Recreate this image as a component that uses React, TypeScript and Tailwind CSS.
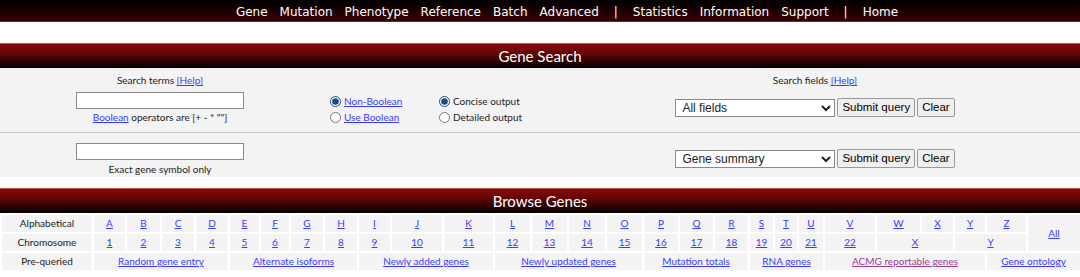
import React from 'react'

const body = { fontFamily: 'Lato, "Open Sans", sans-serif' }
const ctl = { fontFamily: '"Liberation Sans", Arial, sans-serif' }

const navItems = ['Gene', 'Mutation', 'Phenotype', 'Reference', 'Batch', 'Advanced', '|', 'Statistics', 'Information', 'Support', '|', 'Home']

const colWidths = [92, 33, 35, 34, 34, 31, 30, 34, 34, 33, 52, 51, 37, 37, 38, 37, 36, 35, 35, 25, 24, 26, 52, 45, 33, 32, 41, 54]
const letters = 'ABCDEFGHIJKLMNOPQRSTUVWXYZ'.split('')
const chroms = Array.from({ length: 22 }, (_, i) => String(i + 1))
const prequeried: [string, number, boolean?][] = [
  ['Random gene entry', 4],
  ['Alternate isoforms', 4],
  ['Newly added genes', 3],
  ['Newly updated genes', 4],
  ['Mutation totals', 3],
  ['RNA genes', 3],
  ['ACMG reportable genes', 4, true],
  ['Gene ontology', 2],
]

function Bar({ title }: { title: string }) {
  return (
    <div
      className="h-[25px] flex items-center justify-center text-white text-[15px] border-t border-[#c25a5a]"
      style={{ background: 'linear-gradient(to bottom, #8c0a0a 0%, #5a0505 45%, #000 100%)', ...body }}
    >
      {title}
    </div>
  )
}

function Link({ children, visited }: { children: React.ReactNode; visited?: boolean }) {
  return (
    <a href="#" className={visited ? 'underline text-[#9c3d8f]' : 'underline text-[#3b3bff]'}>
      {children}
    </a>
  )
}

function Radio({ checked, name }: { checked?: boolean; name: string }) {
  return (
    <input
      type="radio"
      name={name}
      defaultChecked={checked}
      className="w-[11px] h-[11px] m-0 mr-[3px] accent-[#1d4c80] align-[-1px]"
    />
  )
}

function SelectRow({ value }: { value: string }) {
  return (
    <div className="flex items-center gap-[2px]" style={ctl}>
      <select defaultValue={value} className="w-[160px] h-[18px] text-[12px] leading-[16px] bg-white border border-[#8a8a8a] pl-[2px]">
        <option>{value}</option>
      </select>
      <button className="h-[19px] px-[4px] text-[11.5px] leading-[17px] bg-[#efefef] border border-[#9a9a9a] rounded-[2px] text-black">
        Submit query
      </button>
      <button className="h-[19px] px-[4px] text-[11.5px] leading-[17px] bg-[#efefef] border border-[#9a9a9a] rounded-[2px] text-black">
        Clear
      </button>
    </div>
  )
}

export default function App() {
  const cell = 'border-2 border-white bg-[#f3f3f3] text-center h-[19px] p-0 leading-[15px]'
  return (
    <div className="w-[1080px] h-[277px] bg-white text-[#222] text-[10px] overflow-hidden" style={body}>
      {/* top nav */}
      <div
        className="h-[22px] flex items-center pt-[3px] justify-center gap-[12px] pl-[54px] text-white text-[12px] border-b border-[#3a3a3a]"
        style={{ background: 'linear-gradient(to bottom, #000 0%, #1a0000 50%, #3c0303 100%)', fontFamily: '"DejaVu Sans", Verdana, sans-serif' }}
      >
        {navItems.map((n, i) => (
          <span key={i} className={n === '|' ? 'px-[3px]' : ''}>{n}</span>
        ))}
      </div>

      <div className="h-[21px]" />

      <Bar title="Gene Search" />

      <div className="bg-[#f3f3f3]">
        {/* row 1 */}
        <div className="h-[65px] flex border-b border-[#c8c8c8]">
          <div className="w-[320px] flex flex-col items-center pt-[5px]">
            <div className="leading-[14px]">
              Search terms <Link>[Help]</Link>
            </div>
            <input className="mt-[5px] w-[168px] h-[17px] bg-white border border-[#8a8a8a]" />
            <div className="mt-[1px] leading-[14px]">
              <Link>Boolean</Link> operators are [+ - * ""]
            </div>
          </div>
          <div className="w-[110px] pt-[25px] pl-[10px] leading-[16px]">
            <div className="flex items-center"><Radio name="b" checked /><Link>Non-Boolean</Link></div>
            <div className="flex items-center"><Radio name="b" /><Link>Use Boolean</Link></div>
          </div>
          <div className="w-[210px] pt-[25px] pl-[9px] leading-[16px]">
            <div className="flex items-center"><Radio name="o" checked />Concise output</div>
            <div className="flex items-center"><Radio name="o" />Detailed output</div>
          </div>
          <div className="w-[350px] flex flex-col items-center pt-[5px]">
            <div className="leading-[14px]">
              Search fields <Link>[Help]</Link>
            </div>
            <div className="mt-[11px]">
              <SelectRow value="All fields" />
            </div>
          </div>
        </div>
        {/* row 2 */}
        <div className="h-[44px] flex">
          <div className="w-[320px] flex flex-col items-center pt-[10px]">
            <input className="w-[168px] h-[17px] bg-white border border-[#8a8a8a]" />
            <div className="mt-[2px] leading-[14px]">Exact gene symbol only</div>
          </div>
          <div className="w-[320px]" />
          <div className="w-[350px] flex flex-col items-center pt-[16px]">
            <SelectRow value="Gene summary" />
          </div>
        </div>
      </div>

      <div className="h-[11px]" />

      <Bar title="Browse Genes" />

      <table className="w-[1080px] table-fixed border-collapse border-b-2 border-b-[#c8c8c8]">
        <colgroup>
          {colWidths.map((w, i) => (
            <col key={i} style={{ width: w }} />
          ))}
        </colgroup>
        <tbody>
          <tr>
            <td className={cell}>Alphabetical</td>
            {letters.map((l) => (
              <td key={l} className={cell}><Link>{l}</Link></td>
            ))}
            <td className={cell} rowSpan={2}><Link>All</Link></td>
          </tr>
          <tr>
            <td className={cell}>Chromosome</td>
            {chroms.map((c) => (
              <td key={c} className={cell}><Link>{c}</Link></td>
            ))}
            <td className={cell} colSpan={2}><Link>X</Link></td>
            <td className={cell} colSpan={2}><Link>Y</Link></td>
          </tr>
          <tr>
            <td className={cell}>Pre-queried</td>
            {prequeried.map(([t, span, v]) => (
              <td key={t} className={cell} colSpan={span}><Link visited={v}>{t}</Link></td>
            ))}
          </tr>
        </tbody>
      </table>
    </div>
  )
}
